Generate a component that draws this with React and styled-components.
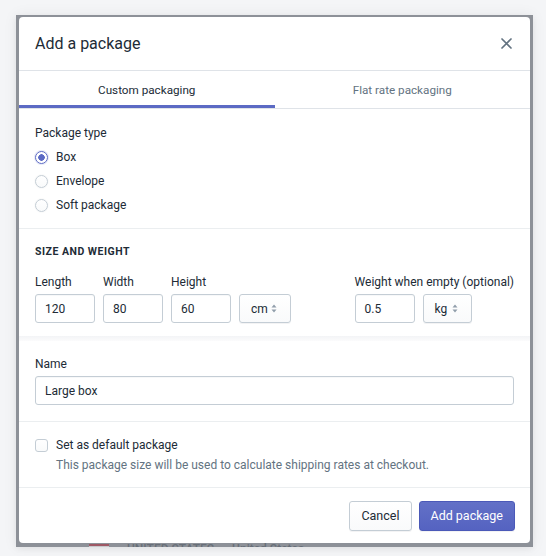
import styled, { createGlobalStyle } from "styled-components";

const GlobalStyle = createGlobalStyle`
    * { box-sizing: border-box; }
    body {
        margin: 0;
        background: #f4f5f7;
        font-family: Roboto, "Liberation Sans", sans-serif;
        color: #212b36;
        -webkit-font-smoothing: antialiased;
    }
`

const CloseIcon = () => (
    <svg width="11" height="11" viewBox="0 0 11 11">
        <path d="M1 1 L10 10 M10 1 L1 10" stroke="#637381" strokeWidth="1.7" strokeLinecap="round" />
    </svg>
)

const Caret = () => (
    <svg width="6" height="9" viewBox="0 0 6 9">
        <path d="M3 0.5 L5.5 3.5 H0.5 Z M3 8.5 L0.5 5.5 H5.5 Z" fill="#919eab" />
    </svg>
)

const App = () => {
    return (
        <Page>
            <GlobalStyle />
            <Backdrop>
                <PageBehind>
                    <Flag />
                    <BehindText>UNITED STATES</BehindText>
                    <BehindText>United States</BehindText>
                </PageBehind>
                <Modal>
                    <Header>
                        <Title>Add a package</Title>
                        <CloseButton><CloseIcon /></CloseButton>
                    </Header>
                    <Tabs>
                        <Tab active>Custom packaging</Tab>
                        <Tab>Flat rate packaging</Tab>
                    </Tabs>
                    <Section pb={11}>
                        <Label>Package type</Label>
                        <RadioList>
                            <RadioRow><Radio checked /> Box</RadioRow>
                            <RadioRow><Radio /> Envelope</RadioRow>
                            <RadioRow><Radio /> Soft package</RadioRow>
                        </RadioList>
                    </Section>
                    <Section pb={13} pt={15}>
                        <Heading>Size and weight</Heading>
                        <FieldsRow>
                            <FieldGroup>
                                <Field>
                                    <Label>Length</Label>
                                    <Input w={60}>120</Input>
                                </Field>
                                <Field>
                                    <Label>Width</Label>
                                    <Input w={60}>80</Input>
                                </Field>
                                <Field>
                                    <Label>Height</Label>
                                    <Input w={60}>60</Input>
                                </Field>
                                <Select w={52}>cm <Caret /></Select>
                            </FieldGroup>
                            <Field>
                                <Label>Weight when empty (optional)</Label>
                                <FieldGroup>
                                    <Input w={60}>0.5</Input>
                                    <Select w={49}>kg <Caret /></Select>
                                </FieldGroup>
                            </Field>
                        </FieldsRow>
                    </Section>
                    <Band />
                    <Section pt={15} pb={16}>
                        <Field>
                            <Label>Name</Label>
                            <Input>Large box</Input>
                        </Field>
                    </Section>
                    <Section pt={15} pb={14}>
                        <CheckRow>
                            <Checkbox />
                            <span>Set as default package</span>
                        </CheckRow>
                        <HelpText>This package size will be used to calculate shipping rates at checkout.</HelpText>
                    </Section>
                    <Footer>
                        <Button>Cancel</Button>
                        <Button primary>Add package</Button>
                    </Footer>
                </Modal>
            </Backdrop>
        </Page>
    )
};

const Page = styled.div`
    width: 546px;
    height: 556px;
    padding: 15px 13px 9px 16px;
`
const Backdrop = styled.div`
    position: relative;
    height: 532px;
    background: #8d9198;
    padding: 2px 3px 4px 3px;
    overflow: hidden;
    box-shadow: 0 0 14px rgba(0, 0, 0, 0.06), 0 2px 6px rgba(0, 0, 0, 0.05);
`
const PageBehind = styled.div`
    position: absolute;
    left: 73px;
    bottom: -7px;
    display: flex;
    align-items: flex-start;
    gap: 18px;
    height: 12px;
    opacity: 0.5;
`
const Flag = styled.div`
    width: 20px;
    height: 8px;
    margin-top: 2px;
    background: repeating-linear-gradient(#b22234 0 2px, #fff 2px 3px);
`
const BehindText = styled.span`
    font-size: 12px;
    font-weight: 500;
    color: #454f5b;
`
const Modal = styled.div`
    position: relative;
    height: 100%;
    background: #fff;
    border-radius: 4px;
    display: flex;
    flex-direction: column;
    overflow: hidden;
`
const Header = styled.div`
    height: 54px;
    display: flex;
    align-items: center;
    justify-content: space-between;
    padding: 0 17px 0 16px;
    border-bottom: 1px solid #dfe3e8;
`
const Title = styled.h2`
    margin: 0;
    font-size: 16px;
    font-weight: 400;
    color: #212b36;
`
const CloseButton = styled.div`
    display: flex;
    width: 14px;
    justify-content: center;
`
const Tabs = styled.div`
    display: grid;
    grid-template-columns: 1fr 1fr;
    height: 38px;
    border-bottom: 1px solid #dfe3e8;
`
const Tab = styled.div`
    display: flex;
    align-items: center;
    justify-content: center;
    font-size: 11.7px;
    color: ${p => p.active ? "#212b36" : "#637381"};
    box-shadow: ${p => p.active ? "inset 0 -3px 0 #5c6ac4" : "none"};
    padding-top: 1px;
`
const Section = styled.div`
    padding: ${p => p.pt ?? 16}px 16px ${p => p.pb ?? 16}px;
    border-bottom: 1px solid #ebeef0;
`
const Band = styled.div`
    height: 5px;
    margin-top: -1px;
    background: linear-gradient(#f3f4f6, #fbfbfc);
`
const Label = styled.div`
    font-size: 12px;
    line-height: 16px;
    color: #212b36;
`
const RadioList = styled.div`
    margin-top: 4px;
    display: flex;
    flex-direction: column;
`
const RadioRow = styled.div`
    height: 24px;
    display: flex;
    align-items: center;
    gap: 8px;
    font-size: 12px;
`
const Radio = styled.span`
    width: 13px;
    height: 13px;
    border-radius: 50%;
    border: 1px solid ${p => p.checked ? "#5c6ac4" : "#c4cdd5"};
    background: ${p => p.checked
        ? "radial-gradient(circle, #5c6ac4 0 3px, #fff 3.5px)"
        : "linear-gradient(#fff, #f9fafb)"};
    box-shadow: 0 0 0 1px ${p => p.checked ? "rgba(92,106,196,0.15)" : "rgba(0,0,0,0.02)"};
`
const Heading = styled.h3`
    margin: 0 0 14px;
    font-size: 10.5px;
    line-height: 16px;
    font-weight: 700;
    letter-spacing: 0.5px;
    text-transform: uppercase;
    color: #212b36;
`
const FieldsRow = styled.div`
    display: flex;
    justify-content: space-between;
    align-items: flex-end;
`
const FieldGroup = styled.div`
    display: flex;
    align-items: flex-end;
    gap: 8px;
`
const Field = styled.div`
    display: flex;
    flex-direction: column;
    gap: 4px;
`
const Input = styled.div`
    width: ${p => p.w ? `${p.w}px` : "100%"};
    height: 29px;
    display: flex;
    align-items: center;
    padding: 0 9px;
    border: 1px solid #c4cdd5;
    border-radius: 3px;
    font-size: 12px;
    color: #212b36;
    box-shadow: inset 0 1px 0 rgba(99, 115, 129, 0.05);
`
const Select = styled.div`
    width: ${p => p.w}px;
    height: 29px;
    display: flex;
    align-items: center;
    justify-content: space-between;
    padding: 0 13px 0 11px;
    border: 1px solid #c4cdd5;
    border-radius: 3px;
    font-size: 12px;
    color: #212b36;
    background: linear-gradient(#fff, #f9fafb);
    box-shadow: 0 1px 0 rgba(22, 29, 37, 0.05);
`
const CheckRow = styled.div`
    display: flex;
    align-items: center;
    gap: 8px;
    height: 16px;
    font-size: 12px;
`
const Checkbox = styled.span`
    width: 13px;
    height: 13px;
    border: 1px solid #c4cdd5;
    border-radius: 3px;
    background: linear-gradient(#fff, #f9fafb);
`
const HelpText = styled.p`
    margin: 4px 0 0 21px;
    font-size: 12px;
    line-height: 16px;
    color: #637381;
`
const Footer = styled.div`
    flex: 1;
    display: flex;
    justify-content: flex-end;
    align-items: center;
    gap: 7px;
    padding: 0 15px 0 16px;
`
const Button = styled.div`
    height: 30px;
    display: flex;
    align-items: center;
    padding: 0 ${p => p.primary ? 11 : 11}px;
    border-radius: 3px;
    font-size: 12.5px;
    border: 1px solid ${p => p.primary ? "#4b59b8" : "#c4cdd5"};
    color: ${p => p.primary ? "#fff" : "#212b36"};
    background: ${p => p.primary
        ? "linear-gradient(#6371c7, #5563c1)"
        : "linear-gradient(#fff, #f9fafb)"};
    box-shadow: 0 1px 0 rgba(22, 29, 37, 0.05);
`

export default App;
